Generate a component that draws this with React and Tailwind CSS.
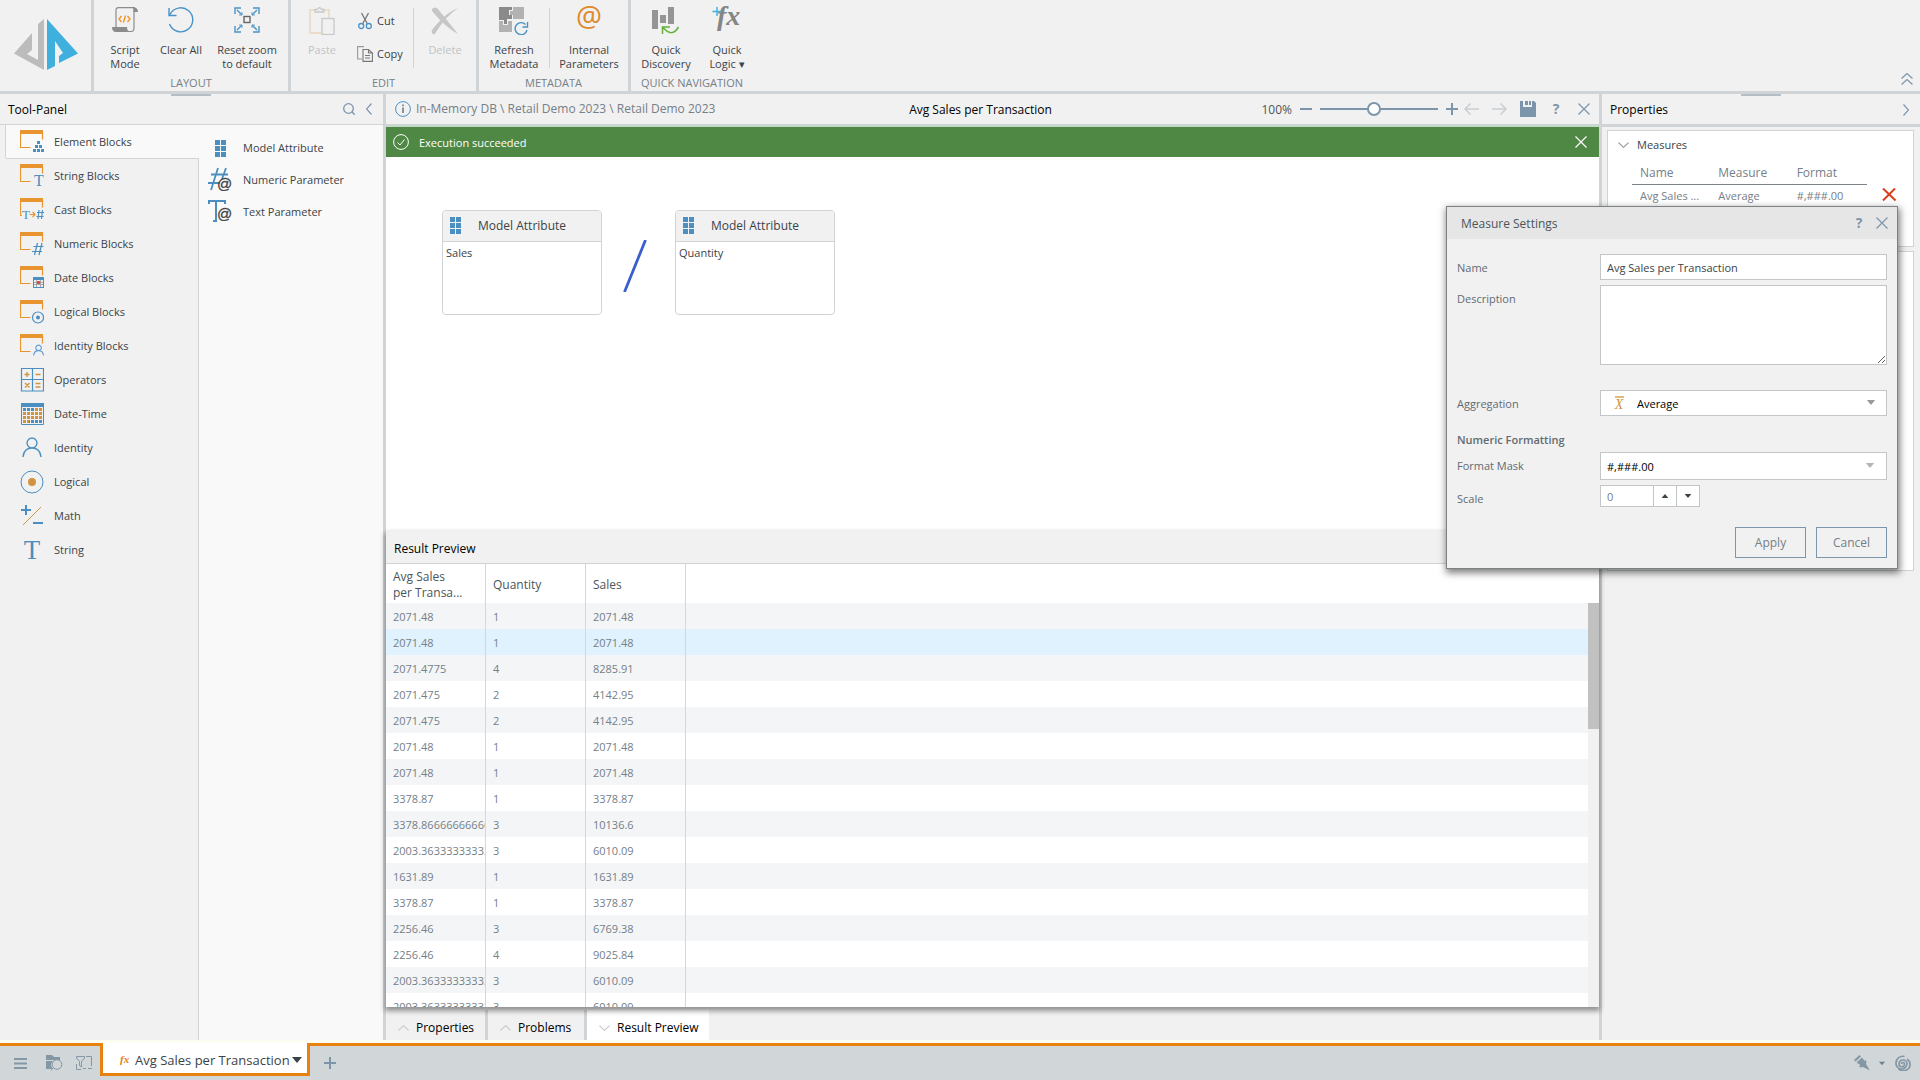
import { useState } from 'react';
import clsx from 'clsx';

/* Ribbon icons */

const LogoIcon = () => (
    <svg className="w-16 h-[52px]" viewBox="0 0 64 52">
        <path d="M30 0V51L0 34.500L18 14V31L13 35L24 41V5Z" fill="#bcbcbc" />
        <path d="M33 0V51L41 47V22L49 34L45 37V44L64 34.500Z" fill="#3fafde" />
    </svg>
);

const ScriptIcon = () => (
    <svg className="w-[26px] h-[26px]" viewBox="0 0 26 26">
        <path d="M4 20V3Q4 .7 6.500 .7H23M22 4V21Q22 24.500 19 24.500H4" fill="none" stroke="#8c8c8c" strokeWidth="1.200" />
        <path d="M21 .5Q26 0 26 5H21.500ZM0 20H15Q15 24.500 18.500 25H4Q0 25 0 20Z" fill="#8c8c8c" />
        <path d="M9.500 9L7 12L9.500 15M15.500 9L18 12L15.500 15M13.500 8.500L11.500 15.500" fill="none" stroke="#f0962a" strokeWidth="1.400" />
    </svg>
);

const ClearIcon = () => (
    <svg className="w-[26px] h-[26px]" viewBox="0 0 26 26" fill="none" stroke="#4a93c7" strokeWidth="1.400">
        <path d="M2 7.500A12 12 0 1 1 1.500 17M1 1V8.500H8.500" />
    </svg>
);

const ResetZoomIcon = () => (
    <svg className="w-[26px] h-[26px]" viewBox="0 0 26 26" fill="none" stroke="#4a93c7" strokeWidth="1.400">
        <path d="M1 7V1H7M19 1H25V7M25 19V25H19M7 25H1V19M3 3L8 8M23 3L18 8M3 23L8 18M23 23L18 18" />
        <path d="M8 5V8H5M18 5V8H21M8 21V18H5M18 21V18H21" strokeWidth=".8" />
        <rect x="10" y="9.500" width="6" height="6" stroke="#666" />
    </svg>
);

const PasteIcon = () => (
    <svg className="w-[26px] h-[28px]" viewBox="0 0 26 28" fill="none" strokeWidth="1.300">
        <path d="M12 26H1V3H6M15 3H20V11" stroke="#ecdcc8" strokeWidth="1.800" />
        <path d="M6 5V2.500H8.500Q10.500 -1 12.500 2.500H15V5Z" stroke="#c8c8c8" />
        <rect x="13" y="11.500" width="12" height="16" stroke="#c8c8c8" />
    </svg>
);

const CutIcon = () => (
    <svg className="w-[14px] h-[18px]" viewBox="0 0 14 18" fill="none">
        <path d="M3.500 1L9.500 12M10.500 1L4.500 12" stroke="#777" strokeWidth="1.300" />
        <circle cx="3.200" cy="14" r="2.500" stroke="#4a93c7" strokeWidth="1.300" />
        <circle cx="10.800" cy="14" r="2.500" stroke="#4a93c7" strokeWidth="1.300" />
    </svg>
);

const CopyIcon = () => (
    <svg className="w-4 h-4" viewBox="0 0 16 16" fill="none" stroke="#777" strokeWidth="1.100">
        <path d="M5 13H.6V.6H7" stroke="#999" />
        <path d="M6 3.500H11.500L15.400 7V15.400H6ZM11.500 3.500V7H15M8 9.500H13M8 12H13" />
    </svg>
);

const DeleteIcon = () => (
    <svg className="w-[28px] h-[28px]" viewBox="0 0 28 28" fill="#c6c6c6">
        <path d="M1 2Q4 -1 7 2Q15 12 27 27Q14 20 1 4Z" />
        <path d="M27 1Q14 10 4.500 26Q2 29 .5 25Q1 22 6 17Q15 6 27 1Z" />
    </svg>
);

const RefreshMetadataIcon = () => (
    <svg className="w-[30px] h-[28px]" viewBox="0 0 30 28">
        <path d="M0 0H13V3H10V8H13V12H8V17H5V13H0Z" fill="#8a8a8a" />
        <path d="M14 0H25V12H14V8H11V4H14ZM0 14H4V18H9V14H13V25H0Z" fill="#b2b2b2" />
        <circle cx="22" cy="21" r="7.500" fill="#f1f1f1" />
        <path d="M26.500 17.500A6 6 0 1 0 28 23M28.500 15V20H23.500" fill="none" stroke="#4a93c7" strokeWidth="1.400" />
    </svg>
);

const AtIcon = () => (
    <svg className="w-[26px] h-[26px] overflow-visible" viewBox="0 0 26 26">
        <text x="13" y="20" textAnchor="middle" fontFamily="Open Sans" fontSize="29" fill="#e0892b">@</text>
    </svg>
);

const DiscoveryIcon = () => (
    <svg className="w-[28px] h-[28px]" viewBox="0 0 28 28">
        <path d="M0 3H6V22H0ZM8 8H14V16H8ZM16 0H22V17H16Z" fill="#959595" />
        <path d="M10.500 27V20H18M11 20.500Q20 31 26.500 20" fill="none" stroke="#62b03a" strokeWidth="1.500" />
    </svg>
);

const FxIcon = () => (
    <svg className="w-[30px] h-[26px] overflow-visible" viewBox="0 0 30 26">
        <text x="5" y="18" fontFamily="Liberation Serif" fontStyle="italic" fontWeight="bold" fontSize="28" fill="#858585">fx</text>
        <path d="M5 0V9M.5 4.500H9.500" stroke="#3fafde" strokeWidth="1.400" />
    </svg>
);

/* Tool panel icons */

const BlockIcon = ({ children }) => (
    <svg className="w-6 h-6" viewBox="0 0 24 24">
        <path d="M10.500 17.500H.5V2M22.500 2V9.500" fill="none" stroke="#e8952f" strokeWidth="1.200" />
        <rect width="23" height="4" fill="#e8952f" />
        {children}
    </svg>
);

const PersonShape = () => <path d="M12 2A5 5 0 1 1 11.990 2M3 21Q4 12 12 12Q20 12 21 21" />;

const ElementBlocksIcon = () => (
    <BlockIcon>
        <path d="M17 11h3v3h-3zM15 15h3v3h-3zM19 15h3v3h-3zM13 19h3v3h-3zM17 19h3v3h-3zM21 19h3v3h-3z" fill="#4a8fbf" />
    </BlockIcon>
);
const StringBlocksIcon = () => (
    <BlockIcon>
        <text x="19" y="22" textAnchor="middle" fontFamily="Liberation Serif" fontSize="16" fill="#4a8fbf">T</text>
    </BlockIcon>
);
const CastBlocksIcon = () => (
    <BlockIcon>
        <rect x="2" y="11" width="22" height="13" fill="#f1f1f1" />
        <text x="2" y="21" fontFamily="Liberation Serif" fontSize="13" fill="#4a8fbf">T</text>
        <path d="M9.500 16.500H14.500M12.500 14L15 16.500L12.500 19" fill="none" stroke="#e8952f" strokeWidth="1.200" />
        <path d="M19 12L18 21M22.500 12L21.500 21M17 14.500H24M16.500 18.500H23.500" fill="none" stroke="#4a8fbf" strokeWidth="1.100" />
    </BlockIcon>
);
const NumericBlocksIcon = () => (
    <BlockIcon>
        <path d="M17.500 11L14.500 23M22 11L19 23M13.500 14.500H23.500M12 19.500H22" fill="none" stroke="#4a8fbf" strokeWidth="1.200" />
    </BlockIcon>
);
const DateBlocksIcon = () => (
    <BlockIcon>
        <rect x="13" y="11" width="11" height="11" fill="#4a8fbf" />
        <path d="M14 14h9v7h-9z" fill="#eee" />
        <path d="M16.500 14v7M20.500 14v7M14 16.500h9M14 18.500h9" stroke="#9a8b98" strokeWidth=".7" />
        <rect x="17" y="15" width="3" height="3" fill="#cf553b" />
    </BlockIcon>
);
const LogicalBlocksIcon = () => (
    <BlockIcon>
        <circle cx="18" cy="17.500" r="5.500" fill="none" stroke="#4a8fbf" strokeWidth="1.200" />
        <circle cx="18" cy="17.500" r="2" fill="#4a8fbf" />
    </BlockIcon>
);
const IdentityBlocksIcon = () => (
    <BlockIcon>
        <g transform="translate(12 10) scale(.55)" fill="none" stroke="#5b9bd5" strokeWidth="2">
            <PersonShape />
        </g>
    </BlockIcon>
);
const OperatorsIcon = () => (
    <svg className="w-6 h-6" viewBox="0 0 24 24" fill="none">
        <path d="M1.500 .5H23.500V23H1.500ZM12.500 .5V23M1.500 11.500H23.500" stroke="#4a8fbf" strokeWidth="1.200" />
        <path d="M4.500 6.500H9.500M7 4V9M15.500 6.500H20.500M5 15L9.500 19.500M9.500 15L5 19.500M15.500 15.500H20.500M15.500 19H20.500" stroke="#cf9440" strokeWidth="1.400" />
    </svg>
);
const DateTimeIcon = () => (
    <svg className="w-6 h-6" viewBox="0 0 24 24">
        <path d="M1.500 1.500H23.500V22.500H1.500Z" fill="none" stroke="#4a8fbf" />
        <path d="M1 1H24V5H1Z" fill="#4a8fbf" />
        <path d="M3 7.500H22M3 19.500H22" stroke="#4a8fbf" strokeWidth="3" strokeDasharray="3 1" />
        <path d="M15 7.500H22M3 11.500H22M3 15.500H22M3 19.500H9" stroke="#cf9440" strokeWidth="3" strokeDasharray="3 1" />
    </svg>
);
const IdentityIcon = () => (
    <svg className="w-6 h-6" viewBox="0 0 24 24" fill="none" stroke="#4a8fbf" strokeWidth="1.400">
        <PersonShape />
    </svg>
);
const LogicalIcon = () => (
    <svg className="w-6 h-6" viewBox="0 0 24 24">
        <circle cx="12" cy="12" r="11" fill="none" stroke="#4a8fbf" />
        <circle cx="12" cy="12" r="4" fill="#cf9440" />
    </svg>
);
const MathIcon = () => (
    <svg className="w-6 h-6" viewBox="0 0 24 24">
        <path d="M6 1V11M1 6H11M13 19H23" stroke="#4a8fbf" strokeWidth="2" />
        <path d="M3 21L21 3" stroke="#cf9440" />
    </svg>
);
const StringIcon = () => (
    <svg className="w-6 h-6 overflow-visible" viewBox="0 0 24 24">
        <text x="12" y="21" textAnchor="middle" fontFamily="Liberation Serif" fontSize="27" fill="#4a8fbf">T</text>
    </svg>
);

const AttributeIcon = () => (
    <svg className="w-[11px] h-[17px]" viewBox="0 0 11 17" fill="#4a8fbf">
        <path d="M0 0h5v5H0zM6 0h5v5H6zM0 6h5v5H0zM6 6h5v5H6zM0 12h5v5H0zM6 12h5v5H6z" />
    </svg>
);
const NumericParamIcon = () => (
    <svg className="w-6 h-[26px]" viewBox="0 0 24 26">
        <path d="M10 1L3 23M18 1L14 12M3 7.500H20M0 16H12" fill="none" stroke="#4a8fbf" strokeWidth="1.800" />
        <text x="9" y="22" fontFamily="Liberation Sans" fontSize="15" fill="#444" stroke="#444" strokeWidth=".3">@</text>
    </svg>
);
const TextParamIcon = () => (
    <svg className="w-6 h-[26px]" viewBox="0 0 24 26">
        <path d="M1 5V2H17V5M8 2V22M5 22H9" fill="none" stroke="#4a8fbf" strokeWidth="2" />
        <text x="9" y="20" fontFamily="Liberation Sans" fontSize="15" fill="#444" stroke="#444" strokeWidth=".3">@</text>
    </svg>
);

/* Small shared icons */

const CrossIcon = ({ className }) => (
    <svg className={className} viewBox="0 0 12 12" fill="none" stroke="currentColor" strokeWidth="1.200">
        <path d="M.5 .5L11.500 11.500M11.500 .5L.5 11.500" />
    </svg>
);
const ChevronIcon = ({ className }) => (
    <svg className={className} viewBox="0 0 12 6" fill="none" stroke="currentColor" strokeWidth="1.200">
        <path d="M.5 .5L6 5.500L11.500 .5" />
    </svg>
);
const CaretIcon = ({ className }) => (
    <svg className={className} viewBox="0 0 10 6" fill="currentColor">
        <path d="M0 0H10L5 6Z" />
    </svg>
);
const PlusIcon = () => (
    <svg className="w-3 h-3" viewBox="0 0 12 12" stroke="#7d95ab" strokeWidth="2">
        <path d="M6 0V12M0 6H12" />
    </svg>
);

const categories = [
    { name: 'Element Blocks', icon: ElementBlocksIcon },
    { name: 'String Blocks', icon: StringBlocksIcon },
    { name: 'Cast Blocks', icon: CastBlocksIcon },
    { name: 'Numeric Blocks', icon: NumericBlocksIcon },
    { name: 'Date Blocks', icon: DateBlocksIcon },
    { name: 'Logical Blocks', icon: LogicalBlocksIcon },
    { name: 'Identity Blocks', icon: IdentityBlocksIcon },
    { name: 'Operators', icon: OperatorsIcon },
    { name: 'Date-Time', icon: DateTimeIcon },
    { name: 'Identity', icon: IdentityIcon },
    { name: 'Logical', icon: LogicalIcon },
    { name: 'Math', icon: MathIcon },
    { name: 'String', icon: StringIcon },
];

const blocks = [
    { name: 'Model Attribute', icon: AttributeIcon },
    { name: 'Numeric Parameter', icon: NumericParamIcon },
    { name: 'Text Parameter', icon: TextParamIcon },
];

const rows = [
    ['2071.48', '1', '2071.48'],
    ['2071.48', '1', '2071.48'],
    ['2071.4775', '4', '8285.91'],
    ['2071.475', '2', '4142.95'],
    ['2071.475', '2', '4142.95'],
    ['2071.48', '1', '2071.48'],
    ['2071.48', '1', '2071.48'],
    ['3378.87', '1', '3378.87'],
    ['3378.8666666666666', '3', '10136.6'],
    ['2003.3633333333333', '3', '6010.09'],
    ['1631.89', '1', '1631.89'],
    ['3378.87', '1', '3378.87'],
    ['2256.46', '3', '6769.38'],
    ['2256.46', '4', '9025.84'],
    ['2003.3633333333333', '3', '6010.09'],
    ['2003.3633333333333', '3', '6010.09'],
];

const RibbonButton = ({ icon: Icon, lines, className, disabled }) => (
    <button disabled={disabled} className={clsx('flex flex-col items-center pt-[7px] leading-[14px]', disabled ? 'text-[#bfc4c7]' : 'text-[#3b4347]', className)}>
        <span className="h-9 flex items-start"><Icon /></span>
        {lines.map(line => <span key={line} className="whitespace-nowrap">{line}</span>)}
    </button>
);

const RibbonGroup = ({ label, last, children }) => (
    <div className={clsx('flex flex-col border-[#d0d4d7]', !last && 'border-r-[3px]')}>
        <div className="flex h-[75px]">{children}</div>
        <div className="text-center text-[#758087]">{label}</div>
    </div>
);

const RibbonDivider = () => <div className="w-px h-[60px] mt-2 bg-[#d0d4d7]" />;

const Ribbon = () => (
    <header className="flex h-[94px] shrink-0 bg-[#f1f1f1] border-b-[3px] border-[#d0d4d7]">
        <div className="w-[94px] pl-[14px] pt-[19px] border-r-[3px] border-[#d0d4d7]"><LogoIcon /></div>
        <RibbonGroup label="LAYOUT">
            <RibbonButton className="w-[62px]" icon={ScriptIcon} lines={['Script', 'Mode']} />
            <RibbonButton className="w-[50px]" icon={ClearIcon} lines={['Clear All']} />
            <RibbonButton className="w-[82px]" icon={ResetZoomIcon} lines={['Reset zoom', 'to default']} />
        </RibbonGroup>
        <RibbonGroup label="EDIT">
            <RibbonButton disabled className="w-[62px]" icon={PasteIcon} lines={['Paste']} />
            <div className="w-[60px] pl-[3px] pt-3 flex flex-col gap-[15px] text-[#3b4347]">
                <button className="flex items-center gap-1 h-[18px]"><span className="w-[17px] flex justify-center"><CutIcon /></span>Cut</button>
                <button className="flex items-center gap-1 h-[18px]"><span className="w-[17px] flex justify-center"><CopyIcon /></span>Copy</button>
            </div>
            <RibbonDivider />
            <RibbonButton disabled className="w-[62px]" icon={DeleteIcon} lines={['Delete']} />
        </RibbonGroup>
        <RibbonGroup label="METADATA">
            <RibbonButton className="w-[70px]" icon={RefreshMetadataIcon} lines={['Refresh', 'Metadata']} />
            <RibbonDivider />
            <RibbonButton className="w-[78px]" icon={AtIcon} lines={['Internal', 'Parameters']} />
        </RibbonGroup>
        <RibbonGroup last label="QUICK NAVIGATION">
            <RibbonButton className="w-[70px]" icon={DiscoveryIcon} lines={['Quick', 'Discovery']} />
            <RibbonButton className="w-[52px]" icon={FxIcon} lines={['Quick', 'Logic ▾']} />
        </RibbonGroup>
        <button aria-label="Collapse ribbon" className="ml-auto self-end mr-[6px] mb-[6px] text-[#7d95ab]">
            <ChevronIcon className="w-[14px] h-1.5 rotate-180" />
            <ChevronIcon className="w-[14px] h-1.5 rotate-180" />
        </button>
    </header>
);

const ToolPanel = () => {
    const [active, setActive] = useState('Element Blocks');
    return (
        <aside className="relative w-[386px] shrink-0 flex flex-col border-r-[3px] border-[#d0d4d7]">
            <div className="absolute top-0 left-[171px] w-10 h-0.5 bg-[#b3bec7]" />
            <div className="h-[31px] shrink-0 flex items-center pl-2 pr-2 border-b border-[#d0d4d7]">
                <h2 className="pt-px text-xs font-medium text-black">Tool-Panel</h2>
                <button aria-label="Search" className="ml-auto">
                    <svg className="w-3 h-3" viewBox="0 0 12 12" fill="none" stroke="#7d95ab" strokeWidth="1.300">
                        <circle cx="5.500" cy="5.500" r="4.800" />
                        <path d="M9 9L11.700 11.700" />
                    </svg>
                </button>
                <button aria-label="Collapse tool panel" className="ml-2 text-[#7d95ab]"><ChevronIcon className="w-3 h-1.5 rotate-90" /></button>
            </div>
            <div className="flex flex-1 min-h-0">
                <ul className="w-[199px] shrink-0 pl-[6px] shadow-[inset_-1px_0_0_#d0d4d7]">
                    {categories.map(({ name, icon: Icon }) => (
                        <li key={name} className="h-[34px]">
                            <button
                                onClick={() => setActive(name)}
                                className={clsx('w-full h-[33px] flex items-center pl-[14px] gap-[10px]', active === name && 'bg-[#f9f9f9] shadow-[-1px_0_0_#d0d4d7,0_1px_0_#d0d4d7]')}
                            >
                                <Icon /> {name}
                            </button>
                        </li>
                    ))}
                </ul>
                <ul className="flex-1 bg-[#f9f9f9] pt-[7px]">
                    {blocks.map(({ name, icon: Icon }) => (
                        <li key={name}>
                            <button className="h-8 flex items-center pl-[9px] gap-[11px]">
                                <span className="w-6 flex justify-center"><Icon /></span> {name}
                            </button>
                        </li>
                    ))}
                </ul>
            </div>
        </aside>
    );
};

const EditorToolbar = () => (
    <div className="h-[33px] shrink-0 flex items-center px-[9px] border-b-[3px] border-[#c9d8ce] text-xs leading-4 text-[#7d95ab]">
        <div className="flex-1 flex items-center gap-[5px]">
            <svg className="w-4 h-4" viewBox="0 0 16 16" fill="none" stroke="#4a93c7">
                <circle cx="8" cy="8" r="7.400" />
                <path d="M8 6.500V12M8 3.500V5.300" stroke="#68747c" strokeWidth="1.500" />
            </svg>
            <span className="text-[#758087]">In-Memory DB \ Retail Demo 2023 \ Retail Demo 2023</span>
        </div>
        <h1 className="pt-px pr-6 font-medium text-black">Avg Sales per Transaction</h1>
        <div className="flex-1 flex items-center justify-end">
            <label htmlFor="zoom" className="pt-px text-[#4c555b]">100%</label>
            <button aria-label="Zoom out" className="mx-2 h-4 w-3 flex items-center"><span className="w-3 h-0.5 bg-[#7d95ab]" /></button>
            <input
                id="zoom"
                type="range"
                min="0"
                max="200"
                defaultValue="90"
                className="w-[118px] h-4 appearance-none bg-transparent [&::-webkit-slider-runnable-track]:h-0.5 [&::-webkit-slider-runnable-track]:bg-[#7d95ab] [&::-webkit-slider-thumb]:appearance-none [&::-webkit-slider-thumb]:w-[14px] [&::-webkit-slider-thumb]:h-[14px] [&::-webkit-slider-thumb]:-mt-1.5 [&::-webkit-slider-thumb]:rounded-full [&::-webkit-slider-thumb]:bg-white [&::-webkit-slider-thumb]:border-2 [&::-webkit-slider-thumb]:border-solid [&::-webkit-slider-thumb]:border-[#7d95ab]"
            />
            <button aria-label="Zoom in" className="ml-2 mr-[6px]"><PlusIcon /></button>
            <button aria-label="Undo" className="mr-[13px]">
                <svg className="w-[15px] h-3" viewBox="0 0 15 12" fill="none" stroke="#c9ced2" strokeWidth="1.500"><path d="M15 6H1M6.500 .5L1 6L6.500 11.500" /></svg>
            </button>
            <button aria-label="Redo" className="mr-[13px]">
                <svg className="w-[15px] h-3" viewBox="0 0 15 12" fill="none" stroke="#c9ced2" strokeWidth="1.500"><path d="M0 6H14M8.500 .5L14 6L8.500 11.500" /></svg>
            </button>
            <button aria-label="Save" className="mr-4">
                <svg className="w-4 h-4" viewBox="0 0 16 16" fill="#7d95ab"><path d="M0 0H3V6H12V0H14L16 2V16H0ZM5 0H8V4H5ZM9 0H11V4H9Z" /></svg>
            </button>
            <button aria-label="Help" className="w-2 mr-[18px] text-sm font-bold leading-4">?</button>
            <button aria-label="Close"><CrossIcon className="w-3 h-3" /></button>
        </div>
    </div>
);

const ModelNode = ({ title, field, className }) => (
    <div className={clsx('absolute top-[53px] w-40 h-[105px] bg-white border border-[#d0d4d7] rounded-[4px] overflow-hidden text-[#3b4347]', className)}>
        <div className="h-[31px] flex items-center px-[7px] pb-px gap-[17px] bg-[#f1f1f1] border-b border-[#d0d4d7] text-xs font-medium">
            <AttributeIcon /> {title}
        </div>
        <div className="px-[3px] py-[3px]">{field}</div>
    </div>
);

const Canvas = () => (
    <div className="relative h-[374px] shrink-0 bg-white">
        <ModelNode className="left-[56px]" title="Model Attribute" field="Sales" />
        <svg className="absolute left-[237px] top-[83px] w-6 h-[52px]" viewBox="0 0 24 52">
            <path d="M1.500 52L22.500 0" stroke="#3a5fcd" strokeWidth="2.800" />
        </svg>
        <ModelNode className="left-[289px]" title="Model Attribute" field="Quantity" />
    </div>
);

const cellClass = 'border-r border-[#d5d8da] p-0 pl-[7px] pt-0.5 text-left overflow-hidden whitespace-nowrap';

const ResultPreview = () => (
    <section className="relative z-10 flex-1 min-h-0 flex flex-col bg-white shadow-[0_3px_5px_1px_rgba(0,0,0,0.4)]">
        <h2 className="h-[33px] shrink-0 flex items-center px-2 pt-[3px] bg-[#f1f1f1] border-b border-[#d0d4d7] text-xs font-medium text-black">Result Preview</h2>
        <div className="flex-1 min-h-0 overflow-hidden">
            <table className="w-full table-fixed border-separate border-spacing-0 text-[#758087]">
                <thead>
                    <tr className="h-[39px] text-xs leading-4 text-[#4c555b]">
                        <th className={clsx(cellClass, 'w-[100px] font-medium')}>Avg Sales<br />per Transa...</th>
                        <th className={clsx(cellClass, 'w-[100px] font-medium')}>Quantity</th>
                        <th className={clsx(cellClass, 'w-[100px] font-medium')}>Sales</th>
                        <th aria-label="Empty column" />
                    </tr>
                </thead>
                <tbody>
                    {rows.map((row, i) => (
                        <tr key={i} className={clsx('h-[26px]', i === 1 ? 'bg-[#e0f2fd]' : i % 2 === 0 ? 'bg-[#f3f5f7]' : 'bg-white')}>
                            {row.map((value, j) => <td key={j} className={cellClass}>{value}</td>)}
                            <td />
                        </tr>
                    ))}
                </tbody>
            </table>
        </div>
        {/* Scroll bar beside the rows */}
        <div className="absolute right-0 top-[72px] bottom-0 w-[11px] bg-[#f1f1f1]">
            <div className="h-[126px] bg-[#c1c1c1]" />
        </div>
    </section>
);

const BottomTabs = () => (
    <div className="h-[33px] shrink-0 flex pt-[3px] bg-[#f1f1f1] text-xs font-medium text-black">
        <button className="w-[102px] flex items-center gap-[7px] pl-3 pt-1.5 border-r-[3px] border-[#d0d4d7]">
            <ChevronIcon className="w-[11px] h-1.5 rotate-180 text-[#c3c7ca]" />Properties
        </button>
        <button className="w-[99px] flex items-center gap-[7px] pl-3 pt-1.5 border-r-[3px] border-[#d0d4d7]">
            <ChevronIcon className="w-[11px] h-1.5 rotate-180 text-[#c3c7ca]" />Problems
        </button>
        <button className="w-[122px] flex items-center gap-[7px] pl-3 pt-1.5 bg-white">
            <ChevronIcon className="w-[11px] h-1.5 text-[#c3c7ca]" />Result Preview
        </button>
    </div>
);

const PropertiesPanel = () => (
    <aside className="relative w-[318px] shrink-0">
        <div className="absolute top-0 left-[139px] w-10 h-0.5 bg-[#b3bec7]" />
        <div className="h-[33px] flex items-center px-2 pt-px border-b-[3px] border-[#d0d4d7]">
            <h2 className="text-xs font-medium text-black">Properties</h2>
            <button aria-label="Collapse properties" className="ml-auto text-[#7d95ab]"><ChevronIcon className="w-3 h-1.5 -rotate-90" /></button>
        </div>
        <div className="pl-[5px] pr-[6px] pt-[3px] flex flex-col gap-1">
            <div className="h-[117px] pt-1 bg-white border border-[#d0d4d7]">
                <button className="flex items-center gap-2 pl-[10px] h-5 font-medium">
                    <ChevronIcon className="w-[11px] h-1.5 text-[#8b9399]" />Measures
                </button>
                <div className="flex pl-6 pt-[7px]">
                    <table className="w-[235px] table-fixed text-xs text-[#758087]">
                        <thead>
                            <tr className="h-[22px] border-b border-[#7c8388]">
                                <th className="pl-2 text-left font-medium">Name</th>
                                <th className="pl-2 text-left font-medium">Measure</th>
                                <th className="pl-2 text-left font-medium">Format</th>
                            </tr>
                        </thead>
                        <tbody className="text-[11px]">
                            <tr className="h-[23px]">
                                <td className="pl-2 pt-0.5">Avg Sales ...</td>
                                <td className="pl-2 pt-0.5">Average</td>
                                <td className="pl-2 pt-0.5">#,###.00</td>
                            </tr>
                        </tbody>
                    </table>
                    <button aria-label="Remove measure" className="self-end ml-[15px] mb-[6px] text-[#d9401a]">
                        <svg className="w-[14px] h-[13px]" viewBox="0 0 14 13" fill="none" stroke="currentColor" strokeWidth="2"><path d="M1 .5L13.500 12.500M13 .5L1 12.500" /></svg>
                    </button>
                </div>
            </div>
            <div className="h-80 bg-white border border-[#d0d4d7]" />
        </div>
    </aside>
);

const labelClass = 'pt-0.5';
const fieldClass = 'w-[287px] bg-white border border-[#c3c6c8] px-[6px]';
const dialogButtonClass = 'w-[71px] h-[31px] border border-[#7d95ab] text-xs text-[#758087]';

const MeasureSettings = () => {
    const [scale, setScale] = useState(0);
    return (
        <div role="dialog" aria-label="Measure Settings" className="absolute z-20 right-[22px] top-[206px] w-[452px] bg-[#f1f1f1] border border-[#7c8184] shadow-[1px_3px_7px_1px_rgba(0,0,0,0.5)] text-[#626b71]">
            <div className="h-8 flex items-center pl-[14px] pr-[9px] bg-[#e6e6e6] text-[#7d95ab]">
                <h2 className="flex-1 pt-0.5 text-xs text-[#4c555b]">Measure Settings</h2>
                <button aria-label="Help" className="w-2 mr-[13px] text-sm font-bold">?</button>
                <button aria-label="Close"><CrossIcon className="w-3 h-3" /></button>
            </div>
            <div className="pl-[10px] pr-[10px] pt-[15px] pb-[10px]">
                <div className="flex justify-between items-center">
                    <label htmlFor="name" className={labelClass}>Name</label>
                    <input id="name" className={clsx(fieldClass, 'h-[26px] pt-px text-[#3b4347]')} defaultValue="Avg Sales per Transaction" />
                </div>
                <div className="flex justify-between items-start mt-[5px]">
                    <label htmlFor="description" className="pt-[6px]">Description</label>
                    <textarea id="description" className={clsx(fieldClass, 'h-20 resize')} />
                </div>
                <div className="flex justify-between items-center mt-[25px]">
                    <label htmlFor="aggregation" className={labelClass}>Aggregation</label>
                    <div className="relative">
                        <select id="aggregation" className={clsx(fieldClass, 'h-[26px] appearance-none pl-9 pt-px text-black')}>
                            <option>Average</option>
                        </select>
                        <svg className="absolute left-[13px] top-[6px] w-3 h-[14px] overflow-visible" viewBox="0 0 12 14">
                            <path d="M2 1H11" stroke="#cf9440" strokeWidth="1.300" />
                            <text x="6" y="13" textAnchor="middle" fontFamily="Liberation Serif" fontStyle="italic" fontSize="14" fill="#cf9440">X</text>
                        </svg>
                        <CaretIcon className="absolute right-[11px] top-[10px] w-[10px] h-[5px] text-[#9a9a9a] pointer-events-none" />
                    </div>
                </div>
                <h3 className="mt-[15px] leading-[18px] font-semibold">Numeric Formatting</h3>
                <div className="flex justify-between items-center mt-[3px]">
                    <label htmlFor="mask">Format Mask</label>
                    <div className="relative">
                        <select id="mask" className={clsx(fieldClass, 'h-7 appearance-none pt-px text-black')}>
                            <option>#,###.00</option>
                        </select>
                        <CaretIcon className="absolute right-[12px] top-[11px] w-[10px] h-[5px] text-[#b5b5b5] pointer-events-none" />
                    </div>
                </div>
                <div className="flex justify-between items-end mt-[5px]">
                    <label htmlFor="scale">Scale</label>
                    <div className="w-[287px] flex h-[22px] text-[#3b4347]">
                        <input id="scale" className="w-[54px] bg-white border border-[#c3c6c8] px-[6px] pt-px text-[#758087]" value={scale} onChange={e => setScale(Number(e.target.value) || 0)} />
                        <button aria-label="Increase scale" onClick={() => setScale(scale + 1)} className="w-[23px] bg-white border-y border-r border-[#c3c6c8] flex items-center justify-center">
                            <CaretIcon className="w-2 h-1 rotate-180" />
                        </button>
                        <button aria-label="Decrease scale" onClick={() => setScale(scale - 1)} className="w-[23px] bg-white border-y border-r border-[#c3c6c8] flex items-center justify-center">
                            <CaretIcon className="w-2 h-1" />
                        </button>
                    </div>
                </div>
                <div className="flex justify-end gap-[10px] mt-5">
                    <button className={dialogButtonClass}>Apply</button>
                    <button className={dialogButtonClass}>Cancel</button>
                </div>
            </div>
        </div>
    );
};

const StatusBar = () => (
    <footer className="h-[37px] shrink-0 flex bg-[#d1d6d9]">
        <div className="w-[100px] flex items-center gap-[19px] pl-[14px] border-t-[3px] border-[#e8820e]">
            <button aria-label="Menu">
                <svg className="w-[13px] h-[11px]" viewBox="0 0 13 11" stroke="#8497a5" strokeWidth="2"><path d="M0 1H13M0 5.500H13M0 10H13" /></svg>
            </button>
            <button aria-label="Browse content">
                <svg className="w-[17px] h-4" viewBox="0 0 17 16">
                    <path d="M0 0H6L8 2H14V5H0ZM0 6H7Q3 10 7 14H0Z" fill="#8497a5" />
                    <circle cx="11" cy="9.500" r="4.800" fill="none" stroke="#8497a5" />
                    <path d="M7 13L5 15.500" stroke="#8497a5" />
                </svg>
            </button>
            <button aria-label="Filters" className="-ml-1.5">
                <svg className="w-4 h-[14px]" viewBox="0 0 16 14" fill="none" stroke="#8497a5">
                    <path d="M.5 .5H8.500V2L5.500 5.500V11L3.500 9.500V5.500L.5 2ZM10 .5H15.500V10M.5 8V13.500H5M7 12.500H10M12 12.500H16" />
                </svg>
            </button>
        </div>
        <button className="w-[210px] h-[33px] flex items-center pl-4 pt-1 bg-white border-x-[3px] border-b-[3px] border-[#e8820e] text-[13px] text-[#3b4347]">
            <svg className="w-[11px] h-3 mr-[5px] overflow-visible" viewBox="0 0 11 12">
                <text x="1" y="9" fontFamily="Liberation Serif" fontStyle="italic" fontWeight="bold" fontSize="11" fill="#e8820e">fx</text>
            </svg>
            Avg Sales per Transaction
            <CaretIcon className="w-[10px] h-1.5 ml-auto mr-[5px]" />
        </button>
        <div className="flex-1 flex items-center pl-[14px] pr-[9px] border-t-[3px] border-[#e8820e]">
            <button aria-label="New tab"><PlusIcon /></button>
            <button aria-label="Pin" className="ml-auto flex items-center gap-[9px] text-[#6d808d]">
                <svg className="w-4 h-4" viewBox="0 0 16 16" fill="#8497a5">
                    <path d="M0 5L5.500 0L7 1.500L1.500 6.500ZM2.500 7.500L8 2.500L11 6.500L7 10.500ZM5 11.500L11.500 5L12.500 6.500L12 9L16 15.500L9 12L6.500 12.500Z" />
                </svg>
                <CaretIcon className="w-1.5 h-[5px]" />
            </button>
            <button aria-label="Assistant" className="ml-[10px]">
                <svg className="w-4 h-4" viewBox="0 0 16 16" fill="none" stroke="#8497a5" strokeWidth="1.700">
                    <path d="M6.500 9A1.500 1.500 0 0 1 9.500 9A2.750 2.750 0 0 1 4 9A4 4 0 0 1 12 9A5.500 5.500 0 0 1 1 8A6.800 6.800 0 0 1 9.500 1.500M15 9A6.500 6.500 0 0 1 3.500 13.500M12 4A6.500 6.500 0 0 1 15 9" />
                </svg>
            </button>
        </div>
    </footer>
);

export default function App() {
    return (
        <div className="relative h-screen flex flex-col overflow-hidden bg-[#f1f1f1] font-['Open_Sans',sans-serif] text-[11px] leading-4 text-[#3b4347]">
            <Ribbon />
            <div className="flex flex-1 min-h-0 border-b-[3px] border-[#fdfdf4]">
                <ToolPanel />
                <main className="flex-1 min-w-0 flex flex-col border-r-[3px] border-[#d0d4d7]">
                    <EditorToolbar />
                    <div role="status" className="h-[30px] shrink-0 flex items-center pl-[7px] pr-3 gap-[10px] bg-[#4f8844] text-white">
                        <svg className="w-4 h-4" viewBox="0 0 16 16" fill="none" stroke="white">
                            <circle cx="8" cy="8" r="7.400" />
                            <path d="M4.500 8.500L7 11L11.500 5.500" />
                        </svg>
                        <span className="pt-px">Execution succeeded</span>
                        <button aria-label="Dismiss" className="ml-auto"><CrossIcon className="w-3 h-3" /></button>
                    </div>
                    <Canvas />
                    <ResultPreview />
                    <BottomTabs />
                </main>
                <PropertiesPanel />
            </div>
            <StatusBar />
            <MeasureSettings />
        </div>
    );
}
